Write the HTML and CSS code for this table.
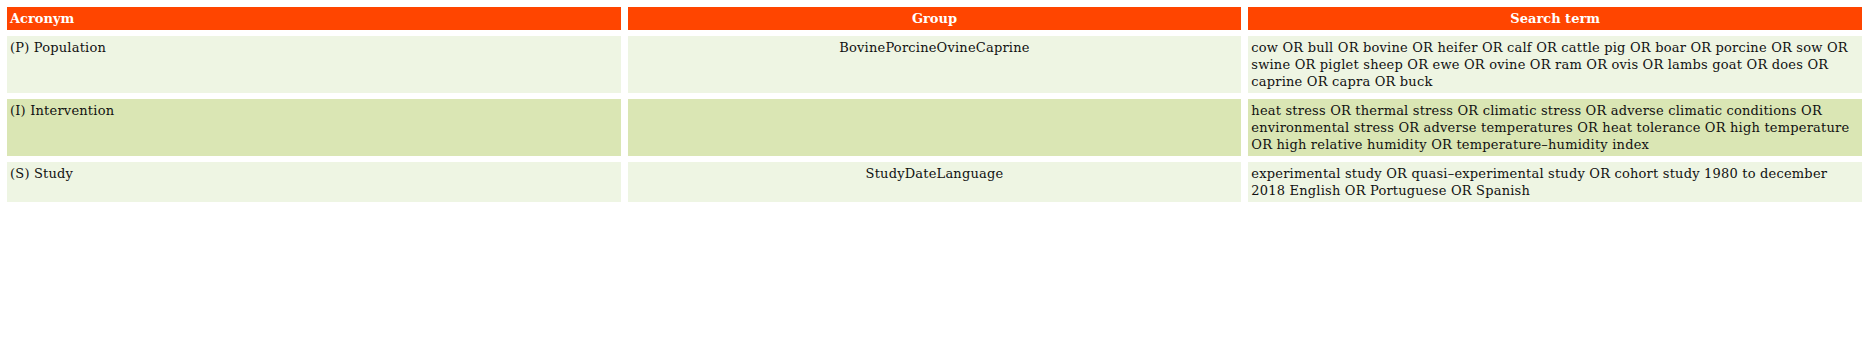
FILE: index.html
```html
<!DOCTYPE html>
<html>
<head>
<meta charset="utf-8">
<link rel="stylesheet" href="styles.css">
</head>
<body>
<table class="picos">
  <thead>
    <tr>
      <th class="h-left">Acronym</th>
      <th>Group</th>
      <th>Search term</th>
    </tr>
  </thead>
  <tbody>
    <tr class="light">
      <td>(P) Population</td>
      <td class="center">BovinePorcineOvineCaprine</td>
      <td>cow OR bull OR bovine OR heifer OR calf OR cattle pig OR boar OR porcine OR sow OR swine OR piglet sheep OR ewe OR ovine OR ram OR ovis OR lambs goat OR does OR caprine OR capra OR buck</td>
    </tr>
    <tr class="dark">
      <td>(I) Intervention</td>
      <td class="center"></td>
      <td>heat stress OR thermal stress OR climatic stress OR adverse climatic conditions OR environmental stress OR adverse temperatures OR heat tolerance OR high temperature OR high relative humidity OR temperature–humidity index</td>
    </tr>
    <tr class="light">
      <td>(S) Study</td>
      <td class="center">StudyDateLanguage</td>
      <td>experimental study OR quasi–experimental study OR cohort study 1980 to december 2018 English OR Portuguese OR Spanish</td>
    </tr>
  </tbody>
</table>
</body>
</html>
```
FILE: styles.css
```css
body {
  margin: 0;
  background: #ffffff;
  font-family: "DejaVu Serif", serif;
}
.picos {
  width: 100%;
  border-collapse: separate;
  border-spacing: 7px 6px;
  margin-top: 1px;
  table-layout: fixed;
  font-size: 13px;
  line-height: 17px;
  color: #111;
}
.picos th {
  background: #ff4500;
  color: #ffffff;
  font-weight: bold;
  padding: 3px 3px;
  text-align: center;
}
.picos th.h-left {
  text-align: left;
}
.picos td {
  padding: 3px 3px;
  vertical-align: top;
  text-align: left;
  letter-spacing: 0.2px;
}
.picos td.center {
  text-align: center;
}
.light td {
  background: #eef5e3;
}
.dark td {
  background: #dae6b4;
}
```
